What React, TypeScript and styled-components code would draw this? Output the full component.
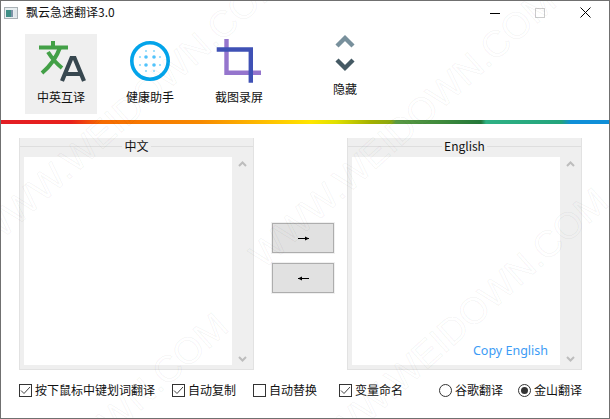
import React from 'react'
import styled, { createGlobalStyle } from 'styled-components'

const GlobalStyle = createGlobalStyle`
  html, body {
    margin: 0;
    padding: 0;
    background: #fff;
  }
  * {
    box-sizing: border-box;
  }
`

const Window = styled.div`
  position: relative;
  width: 610px;
  height: 419px;
  border: 1px solid #707070;
  background: #fff;
  color: #111;
  overflow: hidden;
  display: flex;
  flex-direction: column;
  font-family: 'Noto Sans CJK SC', 'Noto Sans', sans-serif;
  font-size: 12px;
`

const TitleBar = styled.div`
  height: 22px;
  display: flex;
  align-items: center;
  padding: 1px 18px 0 3px;
`

const AppIcon = styled.svg`
  width: 14px;
  height: 12px;
  margin-right: 8px;
`

const Title = styled.div`
  flex: 1;
  line-height: 16px;
  margin-top: -1px;
`

const WindowControls = styled.div`
  display: flex;
  align-items: center;
  gap: 35px;
`

const Toolbar = styled.div`
  height: 97px;
  display: flex;
  padding: 11px 0 0 24px;
  gap: 17px;
`

const ToolButton = styled.div<{ $active?: boolean; $push?: number }>`
  width: 72px;
  height: 80px;
  margin-left: ${({ $push }) => $push || 0}px;
  display: flex;
  flex-direction: column;
  align-items: center;
  background: ${({ $active }) => ($active ? '#efefef' : 'transparent')};
`

const ToolIcon = styled.svg`
  width: 72px;
  height: 54px;
  flex: none;
`

const ToolLabel = styled.div<{ $lift?: number }>`
  line-height: 16px;
  margin-top: ${({ $lift }) => 1 - ($lift || 0)}px;
`

const Rainbow = styled.div`
  height: 4px;
  flex: none;
  background: linear-gradient(
    90deg,
    #e31e24 0,
    #e8201c 70px,
    #f66a00 100px,
    #f78a00 200px,
    #ffc400 270px,
    #ffe600 310px,
    #e0e000 335px,
    #a3b000 370px,
    #8ca810 390px,
    #5a9a44 395px,
    #3f8a3c 440px,
    #23773a 480px,
    #2fb184 485px,
    #23a47c 560px,
    #0f8fd8 570px,
    #0f8fd8 610px
  );
`

const Main = styled.div`
  height: 232px;
  margin-top: 14px;
  padding: 0 27px 0 18px;
  display: flex;
`

const Panel = styled.div`
  width: 235px;
  flex: none;
  display: flex;
  flex-direction: column;
  background: #efefef;
  border: 1px solid #e2e2e2;
  border-top: none;
`

const PanelHeader = styled.div`
  height: 19px;
  flex: none;
  text-align: center;
  border-top: 8px solid #efefef;
  background: linear-gradient(#dedede 0, #dedede 1px, #efefef 1px);
`

const PanelCaption = styled.span`
  display: inline-block;
  position: relative;
  top: -9px;
  padding: 0 2px;
  line-height: 16px;
  background: #efefef;
`

const PanelBody = styled.div`
  flex: 1;
  display: flex;
  margin: 0 0 4px 4px;
`

const TextArea = styled.div`
  position: relative;
  flex: 1;
  background: #fff;
`

const ScrollBar = styled.div`
  width: 21px;
  flex: none;
  display: flex;
  flex-direction: column;
  justify-content: space-between;
  align-items: center;
  padding: 4px 0 3px;
`

const ScrollArrow = styled.svg`
  width: 9px;
  height: 6px;
`

const CopyLink = styled.div`
  position: absolute;
  right: 12px;
  bottom: 5px;
  color: #3c9bf5;
  font-family: 'Noto Sans', sans-serif;
  font-size: 12.5px;
  line-height: 18px;
`

const Middle = styled.div`
  flex: 1;
  padding: 85px 0 0 18px;
  display: flex;
  flex-direction: column;
  gap: 10px;
`

const ArrowButton = styled.div`
  width: 62px;
  height: 30px;
  background: #e1e1e1;
  border: 1px solid #adadad;
  outline: 1px solid #f0f0f0;
  display: flex;
  align-items: center;
  justify-content: center;
`

const ArrowIcon = styled.svg`
  width: 11px;
  height: 7px;
`

const Options = styled.div`
  height: 16px;
  margin-top: 12px;
  padding-left: 18px;
  display: flex;
  align-items: center;
`

const Option = styled.div<{ $width: number }>`
  width: ${({ $width }) => $width}px;
  flex: none;
  display: flex;
  align-items: center;
  gap: 3px;
  line-height: 16px;
`

const CheckBox = styled.div`
  width: 13px;
  height: 13px;
  flex: none;
  border: 1px solid #333;
  display: flex;
  align-items: center;
  justify-content: center;
`

const Radio = styled.div<{ $on?: boolean }>`
  width: 13px;
  height: 13px;
  flex: none;
  border-radius: 50%;
  border: 1px solid #333;
  display: flex;
  align-items: center;
  justify-content: center;
  &::after {
    content: '';
    width: 7px;
    height: 7px;
    border-radius: 50%;
    background: ${({ $on }) => ($on ? '#333' : 'transparent')};
  }
`

const Watermarks = styled.div`
  position: absolute;
  inset: 0;
  pointer-events: none;
`

const Mark = styled.div<{ $x: number; $y: number }>`
  position: absolute;
  left: ${({ $x }) => $x}px;
  top: ${({ $y }) => $y}px;
  transform: rotate(-42deg);
  transform-origin: 0 100%;
  font-family: 'Liberation Sans', sans-serif;
  font-size: 37px;
  line-height: 40px;
  white-space: nowrap;
  color: transparent;
  -webkit-text-stroke: 1px rgba(0, 0, 0, 0.05);
`

const MARKS = [
  { x: -5, y: 215 },
  { x: 268, y: 235 },
  { x: -60, y: 560 },
  { x: 320, y: 435 },
]

function Check() {
  return (
    <svg width="11" height="9" viewBox="0 0 11 9">
      <path d="M1 4.5 L4 7.5 L10 1" fill="none" stroke="#444" strokeWidth="1" />
    </svg>
  )
}

function CheckOption({ width, checked, label }: { width: number; checked?: boolean; label: string }) {
  return (
    <Option $width={width}>
      <CheckBox>{checked && <Check />}</CheckBox>
      <span>{label}</span>
    </Option>
  )
}

function RadioOption({ width, on, label }: { width: number; on?: boolean; label: string }) {
  return (
    <Option $width={width}>
      <Radio $on={on} />
      <span>{label}</span>
    </Option>
  )
}

function TextPanel({ caption, children }: { caption: string; children?: React.ReactNode }) {
  return (
    <Panel>
      <PanelHeader>
        <PanelCaption>{caption}</PanelCaption>
      </PanelHeader>
      <PanelBody>
        <TextArea>{children}</TextArea>
        <ScrollBar>
          <ScrollArrow viewBox="0 0 9 6">
            <path d="M1 5 L4.5 1.5 L8 5" fill="none" stroke="#bdbdbd" strokeWidth="2" />
          </ScrollArrow>
          <ScrollArrow viewBox="0 0 9 6">
            <path d="M1 1 L4.5 4.5 L8 1" fill="none" stroke="#bdbdbd" strokeWidth="2" />
          </ScrollArrow>
        </ScrollBar>
      </PanelBody>
    </Panel>
  )
}

export default function App() {
  return (
    <>
      <GlobalStyle />
      <Window>
        <TitleBar>
          <AppIcon viewBox="0 0 14 12">
            <rect x="0.5" y="0.5" width="13" height="11" fill="#e8eef0" stroke="#a9b1b5" />
            <rect x="2" y="3" width="5" height="7" fill="#3f8f86" />
            <rect x="7" y="3" width="2" height="7" fill="#7d93a8" />
            <rect x="10" y="3" width="3" height="7" fill="#dfe6ea" />
          </AppIcon>
          <Title>飘云急速翻译3.0</Title>
          <WindowControls>
            <svg width="10" height="10" viewBox="0 0 10 10">
              <path d="M0 5.5 H10" stroke="#000" strokeWidth="1" />
            </svg>
            <svg width="10" height="10" viewBox="0 0 10 10">
              <rect x="0.5" y="0.5" width="9" height="9" fill="none" stroke="#ccc" />
            </svg>
            <svg width="11" height="11" viewBox="0 0 11 11">
              <path d="M0.5 0.5 L10.5 10.5 M10.5 0.5 L0.5 10.5" stroke="#000" strokeWidth="1" />
            </svg>
          </WindowControls>
        </TitleBar>
        <Toolbar>
          <ToolButton $active>
            <ToolIcon viewBox="0 0 72 54">
              <path d="M14 13.5 H43 M28 7 V13.5" stroke="#43a047" strokeWidth="4" fill="none" />
              <path d="M35 13.5 C31 25 24 33 17 39 M23 18 C28 26 32 30 37 34" stroke="#43a047" strokeWidth="4" fill="none" />
              <path d="M37 47 L46.5 24 H49.5 L59 47 M40 40 H56" stroke="#37474f" strokeWidth="4.2" fill="none" />
            </ToolIcon>
            <ToolLabel>中英互译</ToolLabel>
          </ToolButton>
          <ToolButton>
            <ToolIcon viewBox="0 0 72 54">
              <circle cx="36" cy="27" r="18.2" fill="none" stroke="#03a4ea" strokeWidth="3.6" />
              {[[32, 23], [40, 23], [32, 31], [40, 31]].map(([cx, cy]) => (
                <circle key={`${cx}-${cy}`} cx={cx} cy={cy} r="1.8" fill="#52c3fb" />
              ))}
              {[[32, 17], [40, 17], [26, 23], [46, 23], [26, 31], [46, 31], [32, 37], [40, 37]].map(([cx, cy]) => (
                <circle key={`${cx}-${cy}`} cx={cx} cy={cy} r="1.1" fill="#8ddafc" />
              ))}
            </ToolIcon>
            <ToolLabel>健康助手</ToolLabel>
          </ToolButton>
          <ToolButton>
            <ToolIcon viewBox="0 0 72 54">
              <path d="M23.5 5 V38.7 H58" fill="none" stroke="#9575cd" strokeWidth="4.4" />
              <path d="M13.7 15.5 H47.8 V48.7" fill="none" stroke="#3f51b5" strokeWidth="4.4" />
            </ToolIcon>
            <ToolLabel>截图录屏</ToolLabel>
          </ToolButton>
          <ToolButton $push={17}>
            <ToolIcon viewBox="0 0 72 54">
              <path d="M28 12 L36 4 L44 12" fill="none" stroke="#78909c" strokeWidth="4.4" />
              <path d="M28 26 L36 34 L44 26" fill="none" stroke="#455a64" strokeWidth="4.4" />
            </ToolIcon>
            <ToolLabel $lift={8}>隐藏</ToolLabel>
          </ToolButton>
        </Toolbar>
        <Rainbow />
        <Main>
          <TextPanel caption="中文" />
          <Middle>
            <ArrowButton>
              <ArrowIcon viewBox="0 0 11 7">
                <path d="M0 3.5 H11" stroke="#000" strokeWidth="1" />
                <path d="M7 1.5 L11 3.5 L7 5.5 Z" fill="#000" />
              </ArrowIcon>
            </ArrowButton>
            <ArrowButton>
              <ArrowIcon viewBox="0 0 11 7">
                <path d="M11 3.5 H0" stroke="#000" strokeWidth="1" />
                <path d="M4 1.5 L0 3.5 L4 5.5 Z" fill="#000" />
              </ArrowIcon>
            </ArrowButton>
          </Middle>
          <TextPanel caption="English">
            <CopyLink>Copy English</CopyLink>
          </TextPanel>
        </Main>
        <Options>
          <CheckOption width={153} checked label="按下鼠标中键划词翻译" />
          <CheckOption width={81} checked label="自动复制" />
          <CheckOption width={86} label="自动替换" />
          <CheckOption width={100} checked label="变量命名" />
          <RadioOption width={79} label="谷歌翻译" />
          <RadioOption width={70} on label="金山翻译" />
        </Options>
        <Watermarks>
          {MARKS.map(m => (
            <Mark key={`${m.x}-${m.y}`} $x={m.x} $y={m.y}>
              WWW.WEIDOWN.COM
            </Mark>
          ))}
        </Watermarks>
      </Window>
    </>
  )
}
